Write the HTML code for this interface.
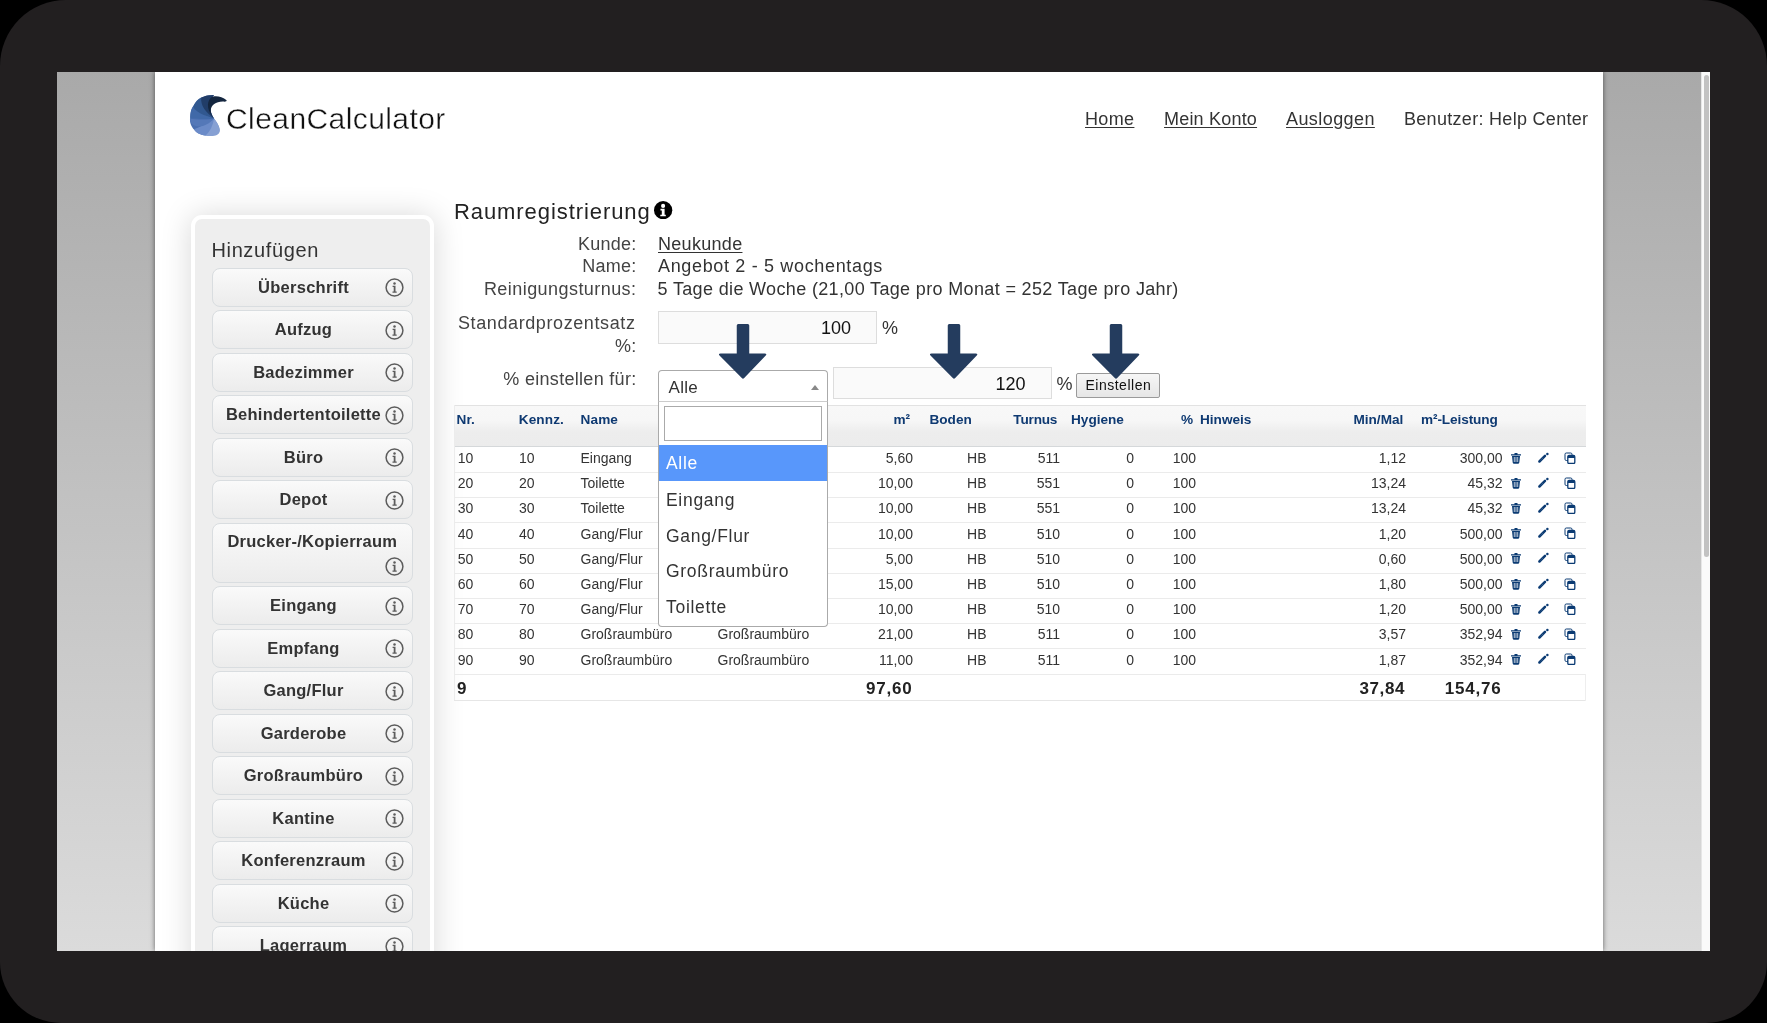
<!DOCTYPE html>
<html><head><meta charset="utf-8"><style>
html,body{margin:0;padding:0}
body{width:1767px;height:1023px;background:#000;position:relative;overflow:hidden;font-family:"Liberation Sans", sans-serif}
.r{position:absolute}
.t{position:absolute;white-space:nowrap;line-height:1;font-family:"Liberation Sans", sans-serif}
#view{position:absolute;left:57px;top:72px;width:1653px;height:879px;overflow:hidden}
#world{will-change:transform;position:absolute;left:-57px;top:-72px;width:1767px;height:1023px}
.btn{position:absolute;left:212px;width:200.5px;box-sizing:border-box;border:1px solid #d9dde0;border-radius:8px;background:linear-gradient(#fafafa 0%,#f4f4f4 40%,#ececec 100%)}
u{text-decoration:underline;text-underline-offset:2px}
</style></head><body>
<div class="r" style="left:0;top:0;width:1767px;height:1023px;background:#221f20;border-radius:66px 66px 61px 61px"></div><div id="view"><div id="world"><div class="r" style="left:57px;top:72px;width:1653px;height:879px;background:linear-gradient(#a9a9a9,#dbdbdb)"></div><div class="r" style="left:155px;top:72px;width:1448px;height:879px;background:#fff;box-shadow:0 0 5px rgba(0,0,0,.55)"></div><div class="r" style="left:1701px;top:72px;width:9px;height:879px;background:#fafafa;box-shadow:inset 1px 0 0 #e6e6e6"></div><div class="r" style="left:1704px;top:75px;width:5px;height:482px;background:#c2c2c2;border-radius:3px"></div><svg class="r" style="left:188px;top:92px" width="42" height="46" viewBox="0 0 42 46">
<path d="M26 26.5 C29 31 31.8 35 31.5 38.5 C31 42.5 26 44 19 43.6 C13 43 8.5 41 6.5 38 C3 35 1.5 30 2.2 26.6 C2.5 20 3.5 16 5.5 13.8 C8 9 12 6 17 4.3 C20 3.3 23 3 26 3.1 C21 9 21 19 26 26.5 Z" fill="#4a6fb0"/>
<path d="M26 26.5 C30 31 32.3 36 31.7 39.5 C31 43.5 25 45 17 43.5 C11 42 7 39.5 7.5 37.5 C14 37 22 33 26 26.5 Z" fill="#86a0d3"/>
<path d="M26 26.5 C25 33 22 40 17.5 43.6 C12 43 6.5 40 6.2 37.2 C12 35 20 31 26 26.5 Z" fill="#6b8bc8"/>
<path d="M26 26.5 C20 34 9 37 4 32 C2 30 1.6 27.5 2.2 26.6 C10 28 19 28.5 26 26.5 Z" fill="#5478b8"/>
<path d="M26 26.5 C16 28 5 26 2.3 26.8 C2 20 3.5 16.5 5.4 14.2 C10 20 18 25 26 26.5 Z" fill="#4069a8"/>
<path d="M26 26.5 C16 24 6 19 5.2 14.6 C7 10 10 7 13.6 5.3 C15 14 19 21 26 26.5 Z" fill="#315890"/>
<path d="M26 26.5 C18 21 12 13 13.3 5.6 C17 3.8 21 3 26 3.1 C20 9 21 19 26 26.5 Z" fill="#213d68"/>
<path d="M26 26.5 C20 20 17.5 11 23 5.5 C27 3 34 4.5 38.6 8.3 C38.8 9.6 37.5 9.8 35 9.6 C28 9.5 23 13 22.8 18.5 C22.8 22 24 24 26 26.5 Z" fill="#14263f"/>
</svg><div class="t " style="top:103.60px;font-size:30px;color:#111;letter-spacing:0.42px;left:226.00px;-webkit-text-stroke:0.4px #fff;">CleanCalculator</div><div class="t " style="top:110.06px;font-size:18px;color:#333;letter-spacing:0.35px;left:1085.00px;"><u>Home</u></div><div class="t " style="top:110.06px;font-size:18px;color:#333;letter-spacing:0.2px;left:1164.00px;"><u>Mein Konto</u></div><div class="t " style="top:110.06px;font-size:18px;color:#333;letter-spacing:0.42px;left:1286.00px;"><u>Ausloggen</u></div><div class="t " style="top:110.06px;font-size:18px;color:#333;letter-spacing:0.3px;left:1404.00px;">Benutzer: Help Center</div><div class="r" style="left:191px;top:215px;width:235px;height:800px;background:#eee;border:4px solid #fff;border-radius:11px;box-shadow:0 1px 30px 1px rgba(0,0,0,.15)"></div><div class="t " style="top:240.47px;font-size:20px;color:#333;letter-spacing:0.62px;left:211.50px;">Hinzufügen</div><div class="btn" style="top:267.70px;height:39px"></div><div class="t " style="top:278.93px;font-size:16.5px;color:#333;font-weight:bold;letter-spacing:0.25px;left:3.50px;width:600px;text-align:center;">Überschrift</div><svg class="r" style="left:384.5px;top:278.20px" width="19" height="19" viewBox="0 0 19 19"><circle cx="9.5" cy="9.5" r="8.4" fill="none" stroke="#5c5c5c" stroke-width="1.5"/><circle cx="9.5" cy="5.4" r="1.25" fill="#5c5c5c"/><path d="M7.6 7.8h2.9v5.6h1.2v1.3H7.5v-1.3h1.2V9.1H7.6z" fill="#5c5c5c"/></svg><div class="btn" style="top:310.20px;height:39px"></div><div class="t " style="top:321.43px;font-size:16.5px;color:#333;font-weight:bold;letter-spacing:0.25px;left:3.50px;width:600px;text-align:center;">Aufzug</div><svg class="r" style="left:384.5px;top:320.70px" width="19" height="19" viewBox="0 0 19 19"><circle cx="9.5" cy="9.5" r="8.4" fill="none" stroke="#5c5c5c" stroke-width="1.5"/><circle cx="9.5" cy="5.4" r="1.25" fill="#5c5c5c"/><path d="M7.6 7.8h2.9v5.6h1.2v1.3H7.5v-1.3h1.2V9.1H7.6z" fill="#5c5c5c"/></svg><div class="btn" style="top:352.70px;height:39px"></div><div class="t " style="top:363.93px;font-size:16.5px;color:#333;font-weight:bold;letter-spacing:0.25px;left:3.50px;width:600px;text-align:center;">Badezimmer</div><svg class="r" style="left:384.5px;top:363.20px" width="19" height="19" viewBox="0 0 19 19"><circle cx="9.5" cy="9.5" r="8.4" fill="none" stroke="#5c5c5c" stroke-width="1.5"/><circle cx="9.5" cy="5.4" r="1.25" fill="#5c5c5c"/><path d="M7.6 7.8h2.9v5.6h1.2v1.3H7.5v-1.3h1.2V9.1H7.6z" fill="#5c5c5c"/></svg><div class="btn" style="top:395.20px;height:39px"></div><div class="t " style="top:406.43px;font-size:16.5px;color:#333;font-weight:bold;letter-spacing:0.25px;left:3.50px;width:600px;text-align:center;">Behindertentoilette</div><svg class="r" style="left:384.5px;top:405.70px" width="19" height="19" viewBox="0 0 19 19"><circle cx="9.5" cy="9.5" r="8.4" fill="none" stroke="#5c5c5c" stroke-width="1.5"/><circle cx="9.5" cy="5.4" r="1.25" fill="#5c5c5c"/><path d="M7.6 7.8h2.9v5.6h1.2v1.3H7.5v-1.3h1.2V9.1H7.6z" fill="#5c5c5c"/></svg><div class="btn" style="top:437.70px;height:39px"></div><div class="t " style="top:448.93px;font-size:16.5px;color:#333;font-weight:bold;letter-spacing:0.25px;left:3.50px;width:600px;text-align:center;">Büro</div><svg class="r" style="left:384.5px;top:448.20px" width="19" height="19" viewBox="0 0 19 19"><circle cx="9.5" cy="9.5" r="8.4" fill="none" stroke="#5c5c5c" stroke-width="1.5"/><circle cx="9.5" cy="5.4" r="1.25" fill="#5c5c5c"/><path d="M7.6 7.8h2.9v5.6h1.2v1.3H7.5v-1.3h1.2V9.1H7.6z" fill="#5c5c5c"/></svg><div class="btn" style="top:480.20px;height:39px"></div><div class="t " style="top:491.43px;font-size:16.5px;color:#333;font-weight:bold;letter-spacing:0.25px;left:3.50px;width:600px;text-align:center;">Depot</div><svg class="r" style="left:384.5px;top:490.70px" width="19" height="19" viewBox="0 0 19 19"><circle cx="9.5" cy="9.5" r="8.4" fill="none" stroke="#5c5c5c" stroke-width="1.5"/><circle cx="9.5" cy="5.4" r="1.25" fill="#5c5c5c"/><path d="M7.6 7.8h2.9v5.6h1.2v1.3H7.5v-1.3h1.2V9.1H7.6z" fill="#5c5c5c"/></svg><div class="btn" style="top:522.70px;height:60px"></div><div class="t " style="top:533.43px;font-size:16.5px;color:#333;font-weight:bold;letter-spacing:0.25px;left:12.30px;width:600px;text-align:center;">Drucker-/Kopierraum</div><svg class="r" style="left:384.5px;top:556.80px" width="19" height="19" viewBox="0 0 19 19"><circle cx="9.5" cy="9.5" r="8.4" fill="none" stroke="#5c5c5c" stroke-width="1.5"/><circle cx="9.5" cy="5.4" r="1.25" fill="#5c5c5c"/><path d="M7.6 7.8h2.9v5.6h1.2v1.3H7.5v-1.3h1.2V9.1H7.6z" fill="#5c5c5c"/></svg><div class="btn" style="top:586.20px;height:39px"></div><div class="t " style="top:597.43px;font-size:16.5px;color:#333;font-weight:bold;letter-spacing:0.25px;left:3.50px;width:600px;text-align:center;">Eingang</div><svg class="r" style="left:384.5px;top:596.70px" width="19" height="19" viewBox="0 0 19 19"><circle cx="9.5" cy="9.5" r="8.4" fill="none" stroke="#5c5c5c" stroke-width="1.5"/><circle cx="9.5" cy="5.4" r="1.25" fill="#5c5c5c"/><path d="M7.6 7.8h2.9v5.6h1.2v1.3H7.5v-1.3h1.2V9.1H7.6z" fill="#5c5c5c"/></svg><div class="btn" style="top:628.70px;height:39px"></div><div class="t " style="top:639.93px;font-size:16.5px;color:#333;font-weight:bold;letter-spacing:0.25px;left:3.50px;width:600px;text-align:center;">Empfang</div><svg class="r" style="left:384.5px;top:639.20px" width="19" height="19" viewBox="0 0 19 19"><circle cx="9.5" cy="9.5" r="8.4" fill="none" stroke="#5c5c5c" stroke-width="1.5"/><circle cx="9.5" cy="5.4" r="1.25" fill="#5c5c5c"/><path d="M7.6 7.8h2.9v5.6h1.2v1.3H7.5v-1.3h1.2V9.1H7.6z" fill="#5c5c5c"/></svg><div class="btn" style="top:671.20px;height:39px"></div><div class="t " style="top:682.43px;font-size:16.5px;color:#333;font-weight:bold;letter-spacing:0.25px;left:3.50px;width:600px;text-align:center;">Gang/Flur</div><svg class="r" style="left:384.5px;top:681.70px" width="19" height="19" viewBox="0 0 19 19"><circle cx="9.5" cy="9.5" r="8.4" fill="none" stroke="#5c5c5c" stroke-width="1.5"/><circle cx="9.5" cy="5.4" r="1.25" fill="#5c5c5c"/><path d="M7.6 7.8h2.9v5.6h1.2v1.3H7.5v-1.3h1.2V9.1H7.6z" fill="#5c5c5c"/></svg><div class="btn" style="top:713.70px;height:39px"></div><div class="t " style="top:724.93px;font-size:16.5px;color:#333;font-weight:bold;letter-spacing:0.25px;left:3.50px;width:600px;text-align:center;">Garderobe</div><svg class="r" style="left:384.5px;top:724.20px" width="19" height="19" viewBox="0 0 19 19"><circle cx="9.5" cy="9.5" r="8.4" fill="none" stroke="#5c5c5c" stroke-width="1.5"/><circle cx="9.5" cy="5.4" r="1.25" fill="#5c5c5c"/><path d="M7.6 7.8h2.9v5.6h1.2v1.3H7.5v-1.3h1.2V9.1H7.6z" fill="#5c5c5c"/></svg><div class="btn" style="top:756.20px;height:39px"></div><div class="t " style="top:767.43px;font-size:16.5px;color:#333;font-weight:bold;letter-spacing:0.25px;left:3.50px;width:600px;text-align:center;">Großraumbüro</div><svg class="r" style="left:384.5px;top:766.70px" width="19" height="19" viewBox="0 0 19 19"><circle cx="9.5" cy="9.5" r="8.4" fill="none" stroke="#5c5c5c" stroke-width="1.5"/><circle cx="9.5" cy="5.4" r="1.25" fill="#5c5c5c"/><path d="M7.6 7.8h2.9v5.6h1.2v1.3H7.5v-1.3h1.2V9.1H7.6z" fill="#5c5c5c"/></svg><div class="btn" style="top:798.70px;height:39px"></div><div class="t " style="top:809.93px;font-size:16.5px;color:#333;font-weight:bold;letter-spacing:0.25px;left:3.50px;width:600px;text-align:center;">Kantine</div><svg class="r" style="left:384.5px;top:809.20px" width="19" height="19" viewBox="0 0 19 19"><circle cx="9.5" cy="9.5" r="8.4" fill="none" stroke="#5c5c5c" stroke-width="1.5"/><circle cx="9.5" cy="5.4" r="1.25" fill="#5c5c5c"/><path d="M7.6 7.8h2.9v5.6h1.2v1.3H7.5v-1.3h1.2V9.1H7.6z" fill="#5c5c5c"/></svg><div class="btn" style="top:841.20px;height:39px"></div><div class="t " style="top:852.43px;font-size:16.5px;color:#333;font-weight:bold;letter-spacing:0.25px;left:3.50px;width:600px;text-align:center;">Konferenzraum</div><svg class="r" style="left:384.5px;top:851.70px" width="19" height="19" viewBox="0 0 19 19"><circle cx="9.5" cy="9.5" r="8.4" fill="none" stroke="#5c5c5c" stroke-width="1.5"/><circle cx="9.5" cy="5.4" r="1.25" fill="#5c5c5c"/><path d="M7.6 7.8h2.9v5.6h1.2v1.3H7.5v-1.3h1.2V9.1H7.6z" fill="#5c5c5c"/></svg><div class="btn" style="top:883.70px;height:39px"></div><div class="t " style="top:894.93px;font-size:16.5px;color:#333;font-weight:bold;letter-spacing:0.25px;left:3.50px;width:600px;text-align:center;">Küche</div><svg class="r" style="left:384.5px;top:894.20px" width="19" height="19" viewBox="0 0 19 19"><circle cx="9.5" cy="9.5" r="8.4" fill="none" stroke="#5c5c5c" stroke-width="1.5"/><circle cx="9.5" cy="5.4" r="1.25" fill="#5c5c5c"/><path d="M7.6 7.8h2.9v5.6h1.2v1.3H7.5v-1.3h1.2V9.1H7.6z" fill="#5c5c5c"/></svg><div class="btn" style="top:926.20px;height:39px"></div><div class="t " style="top:937.43px;font-size:16.5px;color:#333;font-weight:bold;letter-spacing:0.25px;left:3.50px;width:600px;text-align:center;">Lagerraum</div><svg class="r" style="left:384.5px;top:936.70px" width="19" height="19" viewBox="0 0 19 19"><circle cx="9.5" cy="9.5" r="8.4" fill="none" stroke="#5c5c5c" stroke-width="1.5"/><circle cx="9.5" cy="5.4" r="1.25" fill="#5c5c5c"/><path d="M7.6 7.8h2.9v5.6h1.2v1.3H7.5v-1.3h1.2V9.1H7.6z" fill="#5c5c5c"/></svg><div class="t " style="top:200.67px;font-size:22px;color:#222;letter-spacing:0.92px;left:454.00px;">Raumregistrierung</div><svg class="r" style="left:654.4px;top:201.1px" width="18.3" height="18.3" viewBox="0 0 18.3 18.3"><circle cx="9.15" cy="9.15" r="9.15" fill="#000"/><circle cx="9.1" cy="4.9" r="2.05" fill="#fff"/><path d="M6.5 7.8 H10.6 V13.7 H11.8 V15.3 H6.3 V13.7 H7.8 V9.4 H6.5 Z" fill="#fff"/></svg><div class="t " style="top:234.66px;font-size:18px;color:#444;letter-spacing:0.25px;right:1130.50px;">Kunde:</div><div class="t " style="top:257.06px;font-size:18px;color:#444;letter-spacing:0.25px;right:1130.50px;">Name:</div><div class="t " style="top:279.56px;font-size:18px;color:#444;letter-spacing:0.44px;right:1130.50px;">Reinigungsturnus:</div><div class="t " style="top:234.66px;font-size:18px;color:#333;letter-spacing:0.3px;left:658.00px;"><u>Neukunde</u></div><div class="t " style="top:257.06px;font-size:18px;color:#333;letter-spacing:0.66px;left:658.00px;">Angebot 2 - 5 wochentags</div><div class="t " style="top:279.56px;font-size:18px;color:#333;letter-spacing:0.35px;left:657.50px;">5 Tage die Woche (21,00 Tage pro Monat = 252 Tage pro Jahr)</div><div class="t " style="top:313.66px;font-size:18px;color:#444;letter-spacing:0.6px;right:1131.50px;">Standardprozentsatz</div><div class="t " style="top:336.56px;font-size:18px;color:#444;letter-spacing:0.25px;right:1130.50px;">%:</div><div class="t " style="top:370.06px;font-size:18px;color:#444;letter-spacing:0.3px;right:1130.50px;">% einstellen für:</div><div class="r" style="left:658px;top:311.3px;width:218.60000000000002px;height:32.39999999999998px;background:#fafafa;border:1px solid #ddd;box-sizing:border-box"></div><div class="t " style="top:318.56px;font-size:18px;color:#111;right:916.00px;">100</div><div class="t " style="top:318.56px;font-size:18px;color:#333;left:882.00px;">%</div><div class="r" style="left:832.5px;top:367.3px;width:219.0999999999999px;height:32.099999999999966px;background:#fafafa;border:1px solid #ddd;box-sizing:border-box"></div><div class="t " style="top:375.26px;font-size:18px;color:#111;right:741.40px;">120</div><div class="t " style="top:375.26px;font-size:18px;color:#333;left:1056.60px;">%</div><div class="r" style="left:1076.3px;top:372.5px;width:84.20000000000005px;height:25.0px;background:linear-gradient(#f6f6f6,#e6e6e6);border:1px solid #9a9a9a;border-radius:2px;box-sizing:border-box"></div><div class="t " style="top:378.35px;font-size:14px;color:#111;letter-spacing:0.5px;left:1085.50px;">Einstellen</div><div class="r" style="left:454px;top:405px;width:1131.5px;height:42px;background:linear-gradient(#f8f8f8 0%,#f7f7f7 35%,#ededed 65%,#ececec 100%);border-top:1px solid #e2e2e2;border-bottom:1px solid #d5d8da;box-sizing:border-box"></div><div class="r" style="left:454px;top:405px;width:1px;height:296px;background:#ececec"></div><div class="t " style="top:413.48px;font-size:13.6px;color:#0f3a72;font-weight:bold;letter-spacing:0.1px;left:456.50px;">Nr.</div><div class="t " style="top:413.48px;font-size:13.6px;color:#0f3a72;font-weight:bold;letter-spacing:0.1px;left:518.80px;">Kennz.</div><div class="t " style="top:413.48px;font-size:13.6px;color:#0f3a72;font-weight:bold;letter-spacing:0.1px;left:580.60px;">Name</div><div class="t " style="top:413.48px;font-size:13.6px;color:#0f3a72;font-weight:bold;right:857.00px;">m²</div><div class="t " style="top:413.48px;font-size:13.6px;color:#0f3a72;font-weight:bold;left:929.50px;">Boden</div><div class="t " style="top:413.48px;font-size:13.6px;color:#0f3a72;font-weight:bold;letter-spacing:-0.2px;right:709.80px;">Turnus</div><div class="t " style="top:413.48px;font-size:13.6px;color:#0f3a72;font-weight:bold;left:1071.00px;">Hygiene</div><div class="t " style="top:413.48px;font-size:13.6px;color:#0f3a72;font-weight:bold;right:574.00px;">%</div><div class="t " style="top:413.48px;font-size:13.6px;color:#0f3a72;font-weight:bold;left:1200.00px;">Hinweis</div><div class="t " style="top:413.48px;font-size:13.6px;color:#0f3a72;font-weight:bold;right:363.70px;">Min/Mal</div><div class="t " style="top:413.48px;font-size:13.6px;color:#0f3a72;font-weight:bold;letter-spacing:-0.1px;left:1421.00px;">m²-Leistung</div><div class="r" style="left:454px;top:472.01px;width:1131.5px;height:1.0px;background:#ebebeb"></div><div class="t " style="top:450.95px;font-size:14px;color:#333;left:457.80px;">10</div><div class="t " style="top:450.95px;font-size:14px;color:#333;left:519.00px;">10</div><div class="t " style="top:450.95px;font-size:14px;color:#333;left:580.50px;">Eingang</div><div class="t " style="top:450.95px;font-size:14px;color:#333;right:854.00px;">5,60</div><div class="t " style="top:450.95px;font-size:14px;color:#333;right:780.50px;">HB</div><div class="t " style="top:450.95px;font-size:14px;color:#333;right:707.00px;">511</div><div class="t " style="top:450.95px;font-size:14px;color:#333;right:633.00px;">0</div><div class="t " style="top:450.95px;font-size:14px;color:#333;right:571.00px;">100</div><div class="t " style="top:450.95px;font-size:14px;color:#333;right:361.00px;">1,12</div><div class="t " style="top:450.95px;font-size:14px;color:#333;right:264.50px;">300,00</div><svg class="r" style="left:1510px;top:451.50px" width="12" height="12" viewBox="0 0 12 12"><path d="M1 2.2h10v1.3H1z M4.5 1h3v1.5h-3z M2 4h8l-.7 6.5q-.2 1.2-1.4 1.2H4.1q-1.2 0-1.4-1.2z" fill="#0b3b73"/><path d="M4.3 5v5 M6 5v5 M7.7 5v5" stroke="#fff" stroke-width=".7"/></svg><svg class="r" style="left:1537px;top:451.50px" width="12" height="12" viewBox="0 0 12 12"><path d="M2.4 9.5 L8 3.9" stroke="#0b3b73" stroke-width="2.5" stroke-linecap="round"/><path d="M3.6 8.3 L4.4 7.5 M5.2 6.7 L6 5.9" stroke="#fff" stroke-width=".5" opacity=".5"/><circle cx="10.4" cy="1.9" r="1.25" fill="#0b3b73"/></svg><svg class="r" style="left:1564px;top:451.50px" width="12" height="12" viewBox="0 0 12 12"><rect x="1" y="1" width="7" height="7.5" rx="1.3" fill="none" stroke="#0b3b73" stroke-width="1"/><rect x="3.8" y="3.5" width="7" height="8" rx="1.3" fill="#fff" stroke="#0b3b73" stroke-width="1.3"/><path d="M3.8 4.8 q0-1.3 1.3-1.3h4.4q1.3 0 1.3 1.3v1.2h-7z" fill="#0b3b73"/></svg><div class="r" style="left:454px;top:497.22px;width:1131.5px;height:1.0px;background:#ebebeb"></div><div class="t " style="top:476.16px;font-size:14px;color:#333;left:457.80px;">20</div><div class="t " style="top:476.16px;font-size:14px;color:#333;left:519.00px;">20</div><div class="t " style="top:476.16px;font-size:14px;color:#333;left:580.50px;">Toilette</div><div class="t " style="top:476.16px;font-size:14px;color:#333;right:854.00px;">10,00</div><div class="t " style="top:476.16px;font-size:14px;color:#333;right:780.50px;">HB</div><div class="t " style="top:476.16px;font-size:14px;color:#333;right:707.00px;">551</div><div class="t " style="top:476.16px;font-size:14px;color:#333;right:633.00px;">0</div><div class="t " style="top:476.16px;font-size:14px;color:#333;right:571.00px;">100</div><div class="t " style="top:476.16px;font-size:14px;color:#333;right:361.00px;">13,24</div><div class="t " style="top:476.16px;font-size:14px;color:#333;right:264.50px;">45,32</div><svg class="r" style="left:1510px;top:476.71px" width="12" height="12" viewBox="0 0 12 12"><path d="M1 2.2h10v1.3H1z M4.5 1h3v1.5h-3z M2 4h8l-.7 6.5q-.2 1.2-1.4 1.2H4.1q-1.2 0-1.4-1.2z" fill="#0b3b73"/><path d="M4.3 5v5 M6 5v5 M7.7 5v5" stroke="#fff" stroke-width=".7"/></svg><svg class="r" style="left:1537px;top:476.71px" width="12" height="12" viewBox="0 0 12 12"><path d="M2.4 9.5 L8 3.9" stroke="#0b3b73" stroke-width="2.5" stroke-linecap="round"/><path d="M3.6 8.3 L4.4 7.5 M5.2 6.7 L6 5.9" stroke="#fff" stroke-width=".5" opacity=".5"/><circle cx="10.4" cy="1.9" r="1.25" fill="#0b3b73"/></svg><svg class="r" style="left:1564px;top:476.71px" width="12" height="12" viewBox="0 0 12 12"><rect x="1" y="1" width="7" height="7.5" rx="1.3" fill="none" stroke="#0b3b73" stroke-width="1"/><rect x="3.8" y="3.5" width="7" height="8" rx="1.3" fill="#fff" stroke="#0b3b73" stroke-width="1.3"/><path d="M3.8 4.8 q0-1.3 1.3-1.3h4.4q1.3 0 1.3 1.3v1.2h-7z" fill="#0b3b73"/></svg><div class="r" style="left:454px;top:522.43px;width:1131.5px;height:1.0px;background:#ebebeb"></div><div class="t " style="top:501.37px;font-size:14px;color:#333;left:457.80px;">30</div><div class="t " style="top:501.37px;font-size:14px;color:#333;left:519.00px;">30</div><div class="t " style="top:501.37px;font-size:14px;color:#333;left:580.50px;">Toilette</div><div class="t " style="top:501.37px;font-size:14px;color:#333;right:854.00px;">10,00</div><div class="t " style="top:501.37px;font-size:14px;color:#333;right:780.50px;">HB</div><div class="t " style="top:501.37px;font-size:14px;color:#333;right:707.00px;">551</div><div class="t " style="top:501.37px;font-size:14px;color:#333;right:633.00px;">0</div><div class="t " style="top:501.37px;font-size:14px;color:#333;right:571.00px;">100</div><div class="t " style="top:501.37px;font-size:14px;color:#333;right:361.00px;">13,24</div><div class="t " style="top:501.37px;font-size:14px;color:#333;right:264.50px;">45,32</div><svg class="r" style="left:1510px;top:501.92px" width="12" height="12" viewBox="0 0 12 12"><path d="M1 2.2h10v1.3H1z M4.5 1h3v1.5h-3z M2 4h8l-.7 6.5q-.2 1.2-1.4 1.2H4.1q-1.2 0-1.4-1.2z" fill="#0b3b73"/><path d="M4.3 5v5 M6 5v5 M7.7 5v5" stroke="#fff" stroke-width=".7"/></svg><svg class="r" style="left:1537px;top:501.92px" width="12" height="12" viewBox="0 0 12 12"><path d="M2.4 9.5 L8 3.9" stroke="#0b3b73" stroke-width="2.5" stroke-linecap="round"/><path d="M3.6 8.3 L4.4 7.5 M5.2 6.7 L6 5.9" stroke="#fff" stroke-width=".5" opacity=".5"/><circle cx="10.4" cy="1.9" r="1.25" fill="#0b3b73"/></svg><svg class="r" style="left:1564px;top:501.92px" width="12" height="12" viewBox="0 0 12 12"><rect x="1" y="1" width="7" height="7.5" rx="1.3" fill="none" stroke="#0b3b73" stroke-width="1"/><rect x="3.8" y="3.5" width="7" height="8" rx="1.3" fill="#fff" stroke="#0b3b73" stroke-width="1.3"/><path d="M3.8 4.8 q0-1.3 1.3-1.3h4.4q1.3 0 1.3 1.3v1.2h-7z" fill="#0b3b73"/></svg><div class="r" style="left:454px;top:547.64px;width:1131.5px;height:1.0px;background:#ebebeb"></div><div class="t " style="top:526.58px;font-size:14px;color:#333;left:457.80px;">40</div><div class="t " style="top:526.58px;font-size:14px;color:#333;left:519.00px;">40</div><div class="t " style="top:526.58px;font-size:14px;color:#333;left:580.50px;">Gang/Flur</div><div class="t " style="top:526.58px;font-size:14px;color:#333;right:854.00px;">10,00</div><div class="t " style="top:526.58px;font-size:14px;color:#333;right:780.50px;">HB</div><div class="t " style="top:526.58px;font-size:14px;color:#333;right:707.00px;">510</div><div class="t " style="top:526.58px;font-size:14px;color:#333;right:633.00px;">0</div><div class="t " style="top:526.58px;font-size:14px;color:#333;right:571.00px;">100</div><div class="t " style="top:526.58px;font-size:14px;color:#333;right:361.00px;">1,20</div><div class="t " style="top:526.58px;font-size:14px;color:#333;right:264.50px;">500,00</div><svg class="r" style="left:1510px;top:527.13px" width="12" height="12" viewBox="0 0 12 12"><path d="M1 2.2h10v1.3H1z M4.5 1h3v1.5h-3z M2 4h8l-.7 6.5q-.2 1.2-1.4 1.2H4.1q-1.2 0-1.4-1.2z" fill="#0b3b73"/><path d="M4.3 5v5 M6 5v5 M7.7 5v5" stroke="#fff" stroke-width=".7"/></svg><svg class="r" style="left:1537px;top:527.13px" width="12" height="12" viewBox="0 0 12 12"><path d="M2.4 9.5 L8 3.9" stroke="#0b3b73" stroke-width="2.5" stroke-linecap="round"/><path d="M3.6 8.3 L4.4 7.5 M5.2 6.7 L6 5.9" stroke="#fff" stroke-width=".5" opacity=".5"/><circle cx="10.4" cy="1.9" r="1.25" fill="#0b3b73"/></svg><svg class="r" style="left:1564px;top:527.13px" width="12" height="12" viewBox="0 0 12 12"><rect x="1" y="1" width="7" height="7.5" rx="1.3" fill="none" stroke="#0b3b73" stroke-width="1"/><rect x="3.8" y="3.5" width="7" height="8" rx="1.3" fill="#fff" stroke="#0b3b73" stroke-width="1.3"/><path d="M3.8 4.8 q0-1.3 1.3-1.3h4.4q1.3 0 1.3 1.3v1.2h-7z" fill="#0b3b73"/></svg><div class="r" style="left:454px;top:572.85px;width:1131.5px;height:1.0px;background:#ebebeb"></div><div class="t " style="top:551.79px;font-size:14px;color:#333;left:457.80px;">50</div><div class="t " style="top:551.79px;font-size:14px;color:#333;left:519.00px;">50</div><div class="t " style="top:551.79px;font-size:14px;color:#333;left:580.50px;">Gang/Flur</div><div class="t " style="top:551.79px;font-size:14px;color:#333;right:854.00px;">5,00</div><div class="t " style="top:551.79px;font-size:14px;color:#333;right:780.50px;">HB</div><div class="t " style="top:551.79px;font-size:14px;color:#333;right:707.00px;">510</div><div class="t " style="top:551.79px;font-size:14px;color:#333;right:633.00px;">0</div><div class="t " style="top:551.79px;font-size:14px;color:#333;right:571.00px;">100</div><div class="t " style="top:551.79px;font-size:14px;color:#333;right:361.00px;">0,60</div><div class="t " style="top:551.79px;font-size:14px;color:#333;right:264.50px;">500,00</div><svg class="r" style="left:1510px;top:552.34px" width="12" height="12" viewBox="0 0 12 12"><path d="M1 2.2h10v1.3H1z M4.5 1h3v1.5h-3z M2 4h8l-.7 6.5q-.2 1.2-1.4 1.2H4.1q-1.2 0-1.4-1.2z" fill="#0b3b73"/><path d="M4.3 5v5 M6 5v5 M7.7 5v5" stroke="#fff" stroke-width=".7"/></svg><svg class="r" style="left:1537px;top:552.34px" width="12" height="12" viewBox="0 0 12 12"><path d="M2.4 9.5 L8 3.9" stroke="#0b3b73" stroke-width="2.5" stroke-linecap="round"/><path d="M3.6 8.3 L4.4 7.5 M5.2 6.7 L6 5.9" stroke="#fff" stroke-width=".5" opacity=".5"/><circle cx="10.4" cy="1.9" r="1.25" fill="#0b3b73"/></svg><svg class="r" style="left:1564px;top:552.34px" width="12" height="12" viewBox="0 0 12 12"><rect x="1" y="1" width="7" height="7.5" rx="1.3" fill="none" stroke="#0b3b73" stroke-width="1"/><rect x="3.8" y="3.5" width="7" height="8" rx="1.3" fill="#fff" stroke="#0b3b73" stroke-width="1.3"/><path d="M3.8 4.8 q0-1.3 1.3-1.3h4.4q1.3 0 1.3 1.3v1.2h-7z" fill="#0b3b73"/></svg><div class="r" style="left:454px;top:598.06px;width:1131.5px;height:1.0px;background:#ebebeb"></div><div class="t " style="top:577.00px;font-size:14px;color:#333;left:457.80px;">60</div><div class="t " style="top:577.00px;font-size:14px;color:#333;left:519.00px;">60</div><div class="t " style="top:577.00px;font-size:14px;color:#333;left:580.50px;">Gang/Flur</div><div class="t " style="top:577.00px;font-size:14px;color:#333;right:854.00px;">15,00</div><div class="t " style="top:577.00px;font-size:14px;color:#333;right:780.50px;">HB</div><div class="t " style="top:577.00px;font-size:14px;color:#333;right:707.00px;">510</div><div class="t " style="top:577.00px;font-size:14px;color:#333;right:633.00px;">0</div><div class="t " style="top:577.00px;font-size:14px;color:#333;right:571.00px;">100</div><div class="t " style="top:577.00px;font-size:14px;color:#333;right:361.00px;">1,80</div><div class="t " style="top:577.00px;font-size:14px;color:#333;right:264.50px;">500,00</div><svg class="r" style="left:1510px;top:577.55px" width="12" height="12" viewBox="0 0 12 12"><path d="M1 2.2h10v1.3H1z M4.5 1h3v1.5h-3z M2 4h8l-.7 6.5q-.2 1.2-1.4 1.2H4.1q-1.2 0-1.4-1.2z" fill="#0b3b73"/><path d="M4.3 5v5 M6 5v5 M7.7 5v5" stroke="#fff" stroke-width=".7"/></svg><svg class="r" style="left:1537px;top:577.55px" width="12" height="12" viewBox="0 0 12 12"><path d="M2.4 9.5 L8 3.9" stroke="#0b3b73" stroke-width="2.5" stroke-linecap="round"/><path d="M3.6 8.3 L4.4 7.5 M5.2 6.7 L6 5.9" stroke="#fff" stroke-width=".5" opacity=".5"/><circle cx="10.4" cy="1.9" r="1.25" fill="#0b3b73"/></svg><svg class="r" style="left:1564px;top:577.55px" width="12" height="12" viewBox="0 0 12 12"><rect x="1" y="1" width="7" height="7.5" rx="1.3" fill="none" stroke="#0b3b73" stroke-width="1"/><rect x="3.8" y="3.5" width="7" height="8" rx="1.3" fill="#fff" stroke="#0b3b73" stroke-width="1.3"/><path d="M3.8 4.8 q0-1.3 1.3-1.3h4.4q1.3 0 1.3 1.3v1.2h-7z" fill="#0b3b73"/></svg><div class="r" style="left:454px;top:623.27px;width:1131.5px;height:1.0px;background:#ebebeb"></div><div class="t " style="top:602.21px;font-size:14px;color:#333;left:457.80px;">70</div><div class="t " style="top:602.21px;font-size:14px;color:#333;left:519.00px;">70</div><div class="t " style="top:602.21px;font-size:14px;color:#333;left:580.50px;">Gang/Flur</div><div class="t " style="top:602.21px;font-size:14px;color:#333;right:854.00px;">10,00</div><div class="t " style="top:602.21px;font-size:14px;color:#333;right:780.50px;">HB</div><div class="t " style="top:602.21px;font-size:14px;color:#333;right:707.00px;">510</div><div class="t " style="top:602.21px;font-size:14px;color:#333;right:633.00px;">0</div><div class="t " style="top:602.21px;font-size:14px;color:#333;right:571.00px;">100</div><div class="t " style="top:602.21px;font-size:14px;color:#333;right:361.00px;">1,20</div><div class="t " style="top:602.21px;font-size:14px;color:#333;right:264.50px;">500,00</div><svg class="r" style="left:1510px;top:602.76px" width="12" height="12" viewBox="0 0 12 12"><path d="M1 2.2h10v1.3H1z M4.5 1h3v1.5h-3z M2 4h8l-.7 6.5q-.2 1.2-1.4 1.2H4.1q-1.2 0-1.4-1.2z" fill="#0b3b73"/><path d="M4.3 5v5 M6 5v5 M7.7 5v5" stroke="#fff" stroke-width=".7"/></svg><svg class="r" style="left:1537px;top:602.76px" width="12" height="12" viewBox="0 0 12 12"><path d="M2.4 9.5 L8 3.9" stroke="#0b3b73" stroke-width="2.5" stroke-linecap="round"/><path d="M3.6 8.3 L4.4 7.5 M5.2 6.7 L6 5.9" stroke="#fff" stroke-width=".5" opacity=".5"/><circle cx="10.4" cy="1.9" r="1.25" fill="#0b3b73"/></svg><svg class="r" style="left:1564px;top:602.76px" width="12" height="12" viewBox="0 0 12 12"><rect x="1" y="1" width="7" height="7.5" rx="1.3" fill="none" stroke="#0b3b73" stroke-width="1"/><rect x="3.8" y="3.5" width="7" height="8" rx="1.3" fill="#fff" stroke="#0b3b73" stroke-width="1.3"/><path d="M3.8 4.8 q0-1.3 1.3-1.3h4.4q1.3 0 1.3 1.3v1.2h-7z" fill="#0b3b73"/></svg><div class="r" style="left:454px;top:648.48px;width:1131.5px;height:1.0px;background:#ebebeb"></div><div class="t " style="top:627.42px;font-size:14px;color:#333;left:457.80px;">80</div><div class="t " style="top:627.42px;font-size:14px;color:#333;left:519.00px;">80</div><div class="t " style="top:627.42px;font-size:14px;color:#333;left:580.50px;">Großraumbüro</div><div class="t " style="top:627.42px;font-size:14px;color:#333;left:717.50px;">Großraumbüro</div><div class="t " style="top:627.42px;font-size:14px;color:#333;right:854.00px;">21,00</div><div class="t " style="top:627.42px;font-size:14px;color:#333;right:780.50px;">HB</div><div class="t " style="top:627.42px;font-size:14px;color:#333;right:707.00px;">511</div><div class="t " style="top:627.42px;font-size:14px;color:#333;right:633.00px;">0</div><div class="t " style="top:627.42px;font-size:14px;color:#333;right:571.00px;">100</div><div class="t " style="top:627.42px;font-size:14px;color:#333;right:361.00px;">3,57</div><div class="t " style="top:627.42px;font-size:14px;color:#333;right:264.50px;">352,94</div><svg class="r" style="left:1510px;top:627.97px" width="12" height="12" viewBox="0 0 12 12"><path d="M1 2.2h10v1.3H1z M4.5 1h3v1.5h-3z M2 4h8l-.7 6.5q-.2 1.2-1.4 1.2H4.1q-1.2 0-1.4-1.2z" fill="#0b3b73"/><path d="M4.3 5v5 M6 5v5 M7.7 5v5" stroke="#fff" stroke-width=".7"/></svg><svg class="r" style="left:1537px;top:627.97px" width="12" height="12" viewBox="0 0 12 12"><path d="M2.4 9.5 L8 3.9" stroke="#0b3b73" stroke-width="2.5" stroke-linecap="round"/><path d="M3.6 8.3 L4.4 7.5 M5.2 6.7 L6 5.9" stroke="#fff" stroke-width=".5" opacity=".5"/><circle cx="10.4" cy="1.9" r="1.25" fill="#0b3b73"/></svg><svg class="r" style="left:1564px;top:627.97px" width="12" height="12" viewBox="0 0 12 12"><rect x="1" y="1" width="7" height="7.5" rx="1.3" fill="none" stroke="#0b3b73" stroke-width="1"/><rect x="3.8" y="3.5" width="7" height="8" rx="1.3" fill="#fff" stroke="#0b3b73" stroke-width="1.3"/><path d="M3.8 4.8 q0-1.3 1.3-1.3h4.4q1.3 0 1.3 1.3v1.2h-7z" fill="#0b3b73"/></svg><div class="r" style="left:454px;top:673.69px;width:1131.5px;height:1.0px;background:#ebebeb"></div><div class="t " style="top:652.63px;font-size:14px;color:#333;left:457.80px;">90</div><div class="t " style="top:652.63px;font-size:14px;color:#333;left:519.00px;">90</div><div class="t " style="top:652.63px;font-size:14px;color:#333;left:580.50px;">Großraumbüro</div><div class="t " style="top:652.63px;font-size:14px;color:#333;left:717.50px;">Großraumbüro</div><div class="t " style="top:652.63px;font-size:14px;color:#333;right:854.00px;">11,00</div><div class="t " style="top:652.63px;font-size:14px;color:#333;right:780.50px;">HB</div><div class="t " style="top:652.63px;font-size:14px;color:#333;right:707.00px;">511</div><div class="t " style="top:652.63px;font-size:14px;color:#333;right:633.00px;">0</div><div class="t " style="top:652.63px;font-size:14px;color:#333;right:571.00px;">100</div><div class="t " style="top:652.63px;font-size:14px;color:#333;right:361.00px;">1,87</div><div class="t " style="top:652.63px;font-size:14px;color:#333;right:264.50px;">352,94</div><svg class="r" style="left:1510px;top:653.18px" width="12" height="12" viewBox="0 0 12 12"><path d="M1 2.2h10v1.3H1z M4.5 1h3v1.5h-3z M2 4h8l-.7 6.5q-.2 1.2-1.4 1.2H4.1q-1.2 0-1.4-1.2z" fill="#0b3b73"/><path d="M4.3 5v5 M6 5v5 M7.7 5v5" stroke="#fff" stroke-width=".7"/></svg><svg class="r" style="left:1537px;top:653.18px" width="12" height="12" viewBox="0 0 12 12"><path d="M2.4 9.5 L8 3.9" stroke="#0b3b73" stroke-width="2.5" stroke-linecap="round"/><path d="M3.6 8.3 L4.4 7.5 M5.2 6.7 L6 5.9" stroke="#fff" stroke-width=".5" opacity=".5"/><circle cx="10.4" cy="1.9" r="1.25" fill="#0b3b73"/></svg><svg class="r" style="left:1564px;top:653.18px" width="12" height="12" viewBox="0 0 12 12"><rect x="1" y="1" width="7" height="7.5" rx="1.3" fill="none" stroke="#0b3b73" stroke-width="1"/><rect x="3.8" y="3.5" width="7" height="8" rx="1.3" fill="#fff" stroke="#0b3b73" stroke-width="1.3"/><path d="M3.8 4.8 q0-1.3 1.3-1.3h4.4q1.3 0 1.3 1.3v1.2h-7z" fill="#0b3b73"/></svg><div class="r" style="left:454px;top:700px;width:1131.5px;height:1px;background:#e6e6e6"></div><div class="r" style="left:1584.5px;top:674px;width:1.0px;height:27px;background:#eee"></div><div class="t " style="top:679.61px;font-size:17px;color:#222;font-weight:bold;left:457.00px;">9</div><div class="t " style="top:679.61px;font-size:17px;color:#222;font-weight:bold;letter-spacing:0.8px;right:854.50px;">97,60</div><div class="t " style="top:679.61px;font-size:17px;color:#222;font-weight:bold;letter-spacing:0.6px;right:362.00px;">37,84</div><div class="t " style="top:679.61px;font-size:17px;color:#222;font-weight:bold;letter-spacing:0.8px;right:265.50px;">154,76</div><div class="r" style="left:658px;top:370.3px;width:169.60000000000002px;height:31.69999999999999px;background:#fff;border:1px solid #aaa;border-bottom:none;border-radius:4px 4px 0 0;box-sizing:border-box"></div><div class="t " style="top:379.01px;font-size:17px;color:#333;letter-spacing:0.3px;left:668.50px;">Alle</div><div class="r" style="left:811px;top:384.5px;width:0;height:0;border-left:4.5px solid transparent;border-right:4.5px solid transparent;border-bottom:5px solid #888"></div><div class="r" style="left:658px;top:401px;width:169.60000000000002px;height:226px;background:#fff;border:1px solid #aaa;border-top:1px solid #ccc;border-radius:0 0 4px 4px;box-sizing:border-box"></div><div class="r" style="left:663.8px;top:406px;width:158.0px;height:34.5px;background:#fff;border:1px solid #aaa;box-sizing:border-box"></div><div class="r" style="left:659px;top:445px;width:167.60000000000002px;height:36.19999999999999px;background:#5897fb"></div><div class="t " style="top:455.48px;font-size:17.5px;color:#fff;letter-spacing:0.7px;left:666.00px;">Alle</div><div class="t " style="top:491.68px;font-size:17.5px;color:#333;letter-spacing:0.7px;left:666.00px;">Eingang</div><div class="t " style="top:527.53px;font-size:17.5px;color:#333;letter-spacing:0.7px;left:666.00px;">Gang/Flur</div><div class="t " style="top:563.38px;font-size:17.5px;color:#333;letter-spacing:0.7px;left:666.00px;">Großraumbüro</div><div class="t " style="top:599.23px;font-size:17.5px;color:#333;letter-spacing:0.7px;left:666.00px;">Toilette</div><svg class="r" style="left:717.50px;top:323px" width="50" height="58" viewBox="0 0 50 58"><path d="M18.75 2.5 q0-1.5 1.5-1.5h9.5 q1.5 0 1.5 1.5 V30.5 h15.5 q2.5 0 1 2 L26.2 55 q-1.2 1.3 -2.4 0 L1.5 32.5 q-1.5-2 1-2 h16.25 Z" fill="#243c5e"/></svg><svg class="r" style="left:928.70px;top:323px" width="50" height="58" viewBox="0 0 50 58"><path d="M18.75 2.5 q0-1.5 1.5-1.5h9.5 q1.5 0 1.5 1.5 V30.5 h15.5 q2.5 0 1 2 L26.2 55 q-1.2 1.3 -2.4 0 L1.5 32.5 q-1.5-2 1-2 h16.25 Z" fill="#243c5e"/></svg><svg class="r" style="left:1090.70px;top:323px" width="50" height="58" viewBox="0 0 50 58"><path d="M18.75 2.5 q0-1.5 1.5-1.5h9.5 q1.5 0 1.5 1.5 V30.5 h15.5 q2.5 0 1 2 L26.2 55 q-1.2 1.3 -2.4 0 L1.5 32.5 q-1.5-2 1-2 h16.25 Z" fill="#243c5e"/></svg></div></div>
</body></html>
